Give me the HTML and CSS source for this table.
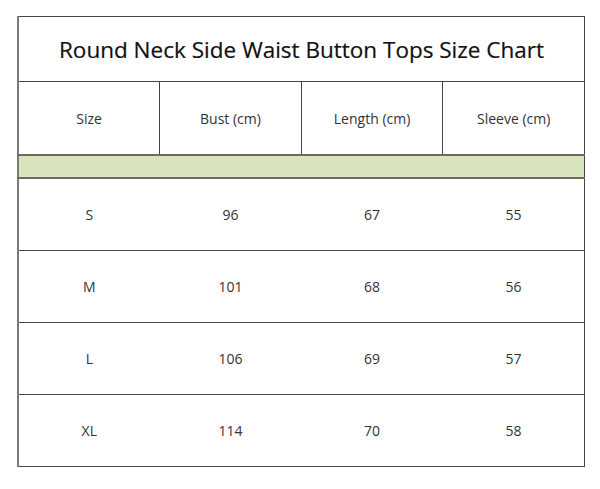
FILE: index.html
```html
<!DOCTYPE html>
<html>
<head>
<meta charset="utf-8">
<link rel="stylesheet" href="styles.css">
</head>
<body>
<table class="chart">
  <tr class="title-row"><td colspan="4" class="title">Round Neck Side Waist Button Tops Size Chart</td></tr>
  <tr class="head-row"><td>Size</td><td>Bust (cm)</td><td>Length (cm)</td><td>Sleeve (cm)</td></tr>
  <tr class="band"><td colspan="4"></td></tr>
  <tr class="row"><td>S</td><td>96</td><td>67</td><td>55</td></tr>
  <tr class="row"><td>M</td><td>101</td><td>68</td><td>56</td></tr>
  <tr class="row"><td>L</td><td>106</td><td>69</td><td>57</td></tr>
  <tr class="row"><td>XL</td><td>114</td><td>70</td><td>58</td></tr>
</table>
</body>
</html>
```
FILE: styles.css
```css
html, body {
  margin: 0;
  background: #fff;
}
body {
  padding: 16px 0 0 17px;
  font-family: "Open Sans", "Noto Sans", sans-serif;
}
.chart {
  border-collapse: collapse;
  width: 568px;
  table-layout: fixed;
  border-left: 2px solid #7a7a7a;
  border-right: 1px solid #444;
  border-top: 1px solid #666;
  border-bottom: 1px solid #555;
}
.chart td {
  border: 1px solid #444;
  text-align: center;
  vertical-align: middle;
  padding: 0;
  color: #333;
  font-size: 14px;
}
.title-row td {
  height: 64px;
  font-size: 22.5px;
  color: #111;
  -webkit-text-stroke: 0.2px #111;
}
.head-row td {
  height: 72px;
}
.band td {
  height: 21px;
  background: #d8e4bc;
  border-top: 2px solid #6b6b60;
  border-bottom: 2px solid #6b6b60;
}
.row td {
  height: 71px;
  border-left: none;
  border-right: none;
}
```
